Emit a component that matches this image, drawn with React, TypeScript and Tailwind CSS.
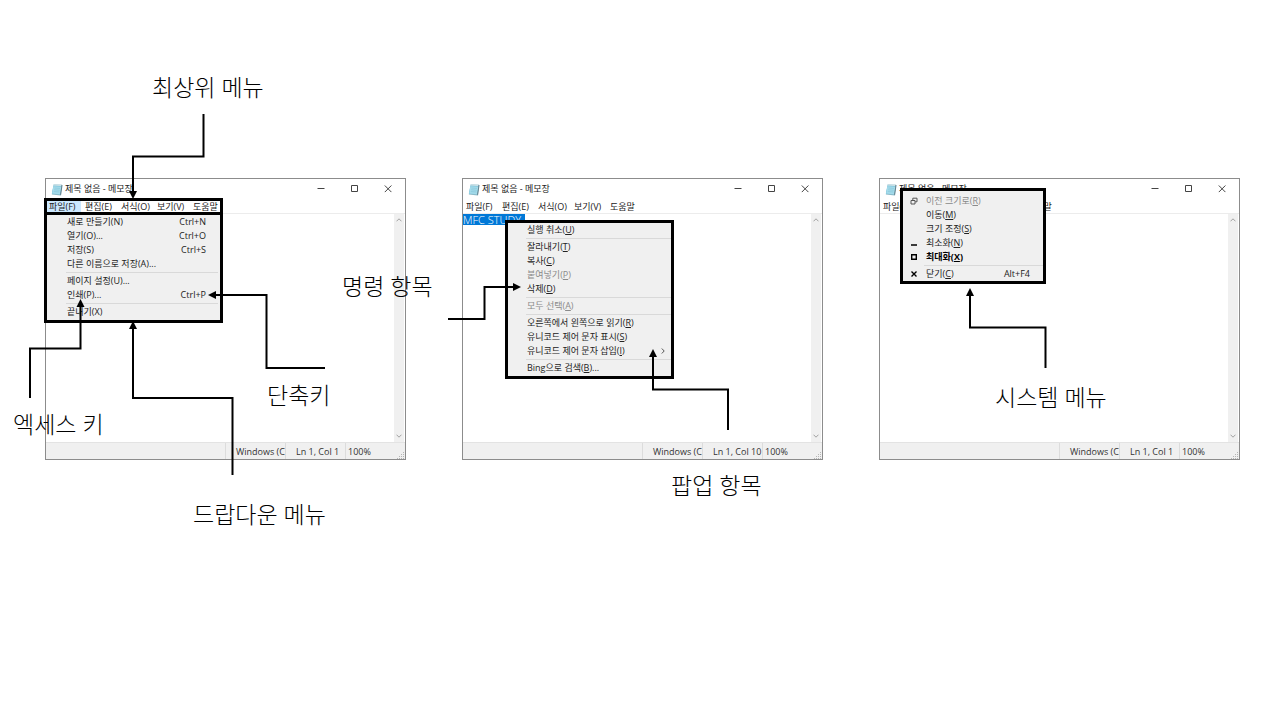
import type { ReactNode } from "react";

type Point = [number, number];

type MenuEntry =
  | "separator"
  | {
      text: string;
      accessKey?: string;
      tail?: string;
      shortcut?: string;
      disabled?: boolean;
      bold?: boolean;
      submenu?: boolean;
      icon?: ReactNode;
    };

const fileMenu: MenuEntry[] = [
  { text: "새로 만들기", accessKey: "N", shortcut: "Ctrl+N" },
  { text: "열기", accessKey: "O", tail: "...", shortcut: "Ctrl+O" },
  { text: "저장", accessKey: "S", shortcut: "Ctrl+S" },
  { text: "다른 이름으로 저장", accessKey: "A", tail: "..." },
  "separator",
  { text: "페이지 설정", accessKey: "U", tail: "..." },
  { text: "인쇄", accessKey: "P", tail: "...", shortcut: "Ctrl+P" },
  "separator",
  { text: "끝내기", accessKey: "X" },
];

const contextMenu: MenuEntry[] = [
  { text: "실행 취소", accessKey: "U" },
  "separator",
  { text: "잘라내기", accessKey: "T" },
  { text: "복사", accessKey: "C" },
  { text: "붙여넣기", accessKey: "P", disabled: true },
  { text: "삭제", accessKey: "D" },
  "separator",
  { text: "모두 선택", accessKey: "A", disabled: true },
  "separator",
  { text: "오른쪽에서 왼쪽으로 읽기", accessKey: "R" },
  { text: "유니코드 제어 문자 표시", accessKey: "S" },
  { text: "유니코드 제어 문자 삽입", accessKey: "I", submenu: true },
  "separator",
  { text: "Bing으로 검색", accessKey: "B", tail: "..." },
];

function RestoreIcon() {
  return (
    <svg viewBox="0 0 8 8" className="size-2" fill="none" stroke="#555" aria-hidden="true">
      <path d="M1 3.5h4v3.5H1zM2.8 3.3V1.2h4.2v3.6H5.2" />
    </svg>
  );
}

function MinimizeGlyph() {
  return (
    <svg viewBox="0 0 8 8" className="size-2" fill="none" stroke="#000" aria-hidden="true">
      <path d="M1 6h6" strokeWidth="1.5" />
    </svg>
  );
}

function MaximizeGlyph() {
  return (
    <svg viewBox="0 0 8 8" className="size-2" fill="none" stroke="#000" aria-hidden="true">
      <path d="M1.7 1.7h4.6v4.6H1.7z" strokeWidth="1.4" />
    </svg>
  );
}

function CloseGlyph() {
  return (
    <svg viewBox="0 0 8 8" className="size-2" fill="none" stroke="#000" aria-hidden="true">
      <path d="M1.5 1.5l5 5M6.5 1.5l-5 5" strokeWidth="1.4" />
    </svg>
  );
}

const systemMenu: MenuEntry[] = [
  { text: "이전 크기로", accessKey: "R", disabled: true, icon: <RestoreIcon /> },
  { text: "이동", accessKey: "M" },
  { text: "크기 조정", accessKey: "S" },
  { text: "최소화", accessKey: "N", icon: <MinimizeGlyph /> },
  { text: "최대화", accessKey: "X", bold: true, icon: <MaximizeGlyph /> },
  "separator",
  { text: "닫기", accessKey: "C", shortcut: "Alt+F4", icon: <CloseGlyph /> },
];

function NotepadIcon() {
  return (
    <svg viewBox="0 0 12 13" className="h-[13px] w-3 shrink-0" aria-hidden="true">
      <path d="M3 1.5l8.2.6-1.5 10.4-8.9-1z" fill="#8fb9c6" />
      <path d="M2.6 1.4l8 .4-1.4 9.7-8.4-.8z" fill="#7cc4dc" />
      <path d="M2.4 3.2l7.9.5-1.1 7.6-8-.8z" fill="#a5dbea" />
      <path d="M2.6 1.2l8 .4-.2 1.3-8-.4z" fill="#d5e3e6" />
      <path d="M10.6 1.8l.9.4-1.5 10.2-.9-.8z" fill="#607f8b" />
      <path d="M3.4 5l5.6.4M3.1 6.8l5.6.4M2.8 8.6l5.6.4" stroke="#79bdd2" strokeWidth=".5" />
    </svg>
  );
}

function TitleBar() {
  return (
    <header className="flex h-5 items-center pl-[5px]">
      <NotepadIcon />
      <h2 className="flex-1 pl-[2px] whitespace-nowrap text-[#222]">제목 없음 - 메모장</h2>
      <button type="button" aria-label="최소화" className="flex h-5 w-8 items-center justify-center">
        <svg viewBox="0 0 8 8" className="size-2" stroke="#444" aria-hidden="true">
          <path d="M.5 3.5h7" />
        </svg>
      </button>
      <button type="button" aria-label="최대화" className="flex h-5 w-[34px] items-center justify-center">
        <svg viewBox="0 0 8 8" className="size-2" fill="none" stroke="#444" aria-hidden="true">
          <path d="M1.5 .5h6v6h-6z" />
        </svg>
      </button>
      <button type="button" aria-label="닫기" className="flex h-5 w-[34px] items-center justify-center">
        <svg viewBox="0 0 8 8" className="size-2" stroke="#444" aria-hidden="true">
          <path d="M.8 .5l6.6 6.6M7.4 .5L.8 7.1" />
        </svg>
      </button>
    </header>
  );
}

function MenuBar({ open }: { open: boolean }) {
  const items = ["파일(F)", "편집(E)", "서식(O)", "보기(V)", "도움말"];
  return (
    <nav className="flex h-[15px] gap-[2px] border-b border-[#ececec] pl-px">
      {items.map((item, index) => (
        <button
          key={item}
          type="button"
          className={`w-[34px] pt-px pl-[2px] text-left whitespace-nowrap ${
            open && index === 0 ? "bg-[#cce8ff]" : ""
          }`}
        >
          {item}
        </button>
      ))}
    </nav>
  );
}

function ScrollBar() {
  return (
    <div className="mr-px flex w-[10px] shrink-0 flex-col justify-between bg-[#f0f0f0]">
      <button type="button" aria-label="위로 스크롤" className="flex h-3 items-center justify-center">
        <svg viewBox="0 0 6 4" className="h-1 w-1.5" fill="none" stroke="#a0a0a0" aria-hidden="true">
          <path d="M.5 3.3L3 .8l2.5 2.5" />
        </svg>
      </button>
      <button type="button" aria-label="아래로 스크롤" className="flex h-3 items-center justify-center">
        <svg viewBox="0 0 6 4" className="h-1 w-1.5" fill="none" stroke="#a0a0a0" aria-hidden="true">
          <path d="M.5 .7L3 3.2 5.5 .7" />
        </svg>
      </button>
    </div>
  );
}

function StatusBar({ position }: { position: string }) {
  return (
    <footer className="flex h-[17px] border-t border-[#e3e3e3] bg-[#f0f0f0] leading-[18px] whitespace-nowrap text-[#333]">
      <span className="flex-1" />
      <span className="w-[60px] overflow-hidden border-l border-[#dcdcdc] pl-[10px]">Windows (CRLF)</span>
      <span className="w-[60px] border-l border-[#dcdcdc] pl-[10px]">{position}</span>
      <span className="flex w-[60px] items-start justify-between border-l border-[#dcdcdc] pl-[2px]">
        100%
        <svg viewBox="0 0 8 8" className="size-2 self-end" fill="#b5b5b5" aria-hidden="true">
          <path d="M6 1h1v1H6zM4 3h1v1H4zM6 3h1v1H6zM2 5h1v1H2zM4 5h1v1H4zM6 5h1v1H6zM0 7h1v1H0zM2 7h1v1H2zM4 7h1v1H4zM6 7h1v1H6z" />
        </svg>
      </span>
    </footer>
  );
}

function NotepadWindow({
  text = "",
  position,
  menuOpen = false,
}: {
  text?: string;
  position: string;
  menuOpen?: boolean;
}) {
  return (
    <section className="flex h-[282px] flex-col border border-[#8c8c8c] bg-white">
      <TitleBar />
      <MenuBar open={menuOpen} />
      <div className="flex min-h-0 flex-1">
        <div className="flex min-w-0 flex-1 items-start">
          <textarea
            aria-label="본문"
            defaultValue={text}
            rows={1}
            className={
              text
                ? "h-[11px] w-[62px] resize-none overflow-hidden bg-[#0078d7] text-[11px] leading-[11px] font-light whitespace-nowrap text-white outline-none"
                : "h-full w-full resize-none outline-none"
            }
          />
        </div>
        <ScrollBar />
      </div>
      <StatusBar position={position} />
    </section>
  );
}

function MenuList({
  entries,
  underline = false,
  iconColumn = false,
  rowClass,
  separatorClass,
}: {
  entries: MenuEntry[];
  underline?: boolean;
  iconColumn?: boolean;
  rowClass: string;
  separatorClass: string;
}) {
  return (
    <ul>
      {entries.map((entry, index) =>
        entry === "separator" ? (
          <li key={index} className={`flex h-[3px] items-center ${separatorClass}`}>
            <hr className="w-full border-[#d9d9d9]" />
          </li>
        ) : (
          <li key={index}>
            <button
              type="button"
              disabled={entry.disabled}
              className={`flex h-[14px] w-full items-center text-left whitespace-nowrap ${rowClass} ${
                entry.disabled ? "text-[#8a8a8a]" : entry.bold ? "font-bold text-black" : "text-[#222]"
              }`}
            >
              {iconColumn && <span className="flex w-4 shrink-0">{entry.icon}</span>}
              <span className="flex-1">
                {entry.text}(
                <span className={underline ? "underline underline-offset-1" : ""}>{entry.accessKey}</span>)
                {entry.tail}
              </span>
              {entry.shortcut && <span>{entry.shortcut}</span>}
              {entry.submenu && (
                <svg viewBox="0 0 4 6" className="h-1.5 w-1" fill="none" stroke="#444" aria-hidden="true">
                  <path d="M.8 .5L3.2 3 .8 5.5" strokeWidth=".9" />
                </svg>
              )}
            </button>
          </li>
        ),
      )}
    </ul>
  );
}

function Connectors({ lines }: { lines: Point[][] }) {
  return (
    <svg className="pointer-events-none absolute inset-0 h-full w-full overflow-visible" aria-hidden="true">
      {lines.map((points, index) => {
        const [tipX, tipY] = points[points.length - 1];
        const [prevX, prevY] = points[points.length - 2];
        const dx = Math.sign(tipX - prevX);
        const dy = Math.sign(tipY - prevY);
        const baseX = tipX - dx * 8;
        const baseY = tipY - dy * 8;
        const path = [...points.slice(0, -1), [baseX, baseY]].map((p) => p.join(",")).join(" ");
        const head = `${tipX},${tipY} ${baseX + dy * 4},${baseY + dx * 4} ${baseX - dy * 4},${baseY - dx * 4}`;
        return (
          <g key={index}>
            <polyline points={path} fill="none" stroke="#000" strokeWidth="2" />
            <polygon points={head} fill="#000" />
          </g>
        );
      })}
    </svg>
  );
}

function Label({ place, children }: { place: string; children: ReactNode }) {
  return (
    <p className={`absolute text-[23px] leading-6 font-light whitespace-nowrap text-black ${place}`}>{children}</p>
  );
}

export default function App() {
  return (
    <main className="min-h-screen overflow-x-hidden bg-white pt-[178px] pr-10 pb-10 pl-[45px] font-['Open_Sans','Noto_Sans_CJK_KR',sans-serif] text-[9px] leading-[14px] text-[#222]">
      <div className="grid grid-cols-3 gap-14">
        <figure className="relative">
          <NotepadWindow position="Ln 1, Col 1" menuOpen />
          <div className="pointer-events-none absolute top-5 -left-px h-[17px] w-[179px] border-3 border-black" />
          <div className="absolute top-[34px] -left-px w-[179px] border-3 border-black bg-[#f0f0f0] pb-px">
            <MenuList entries={fileMenu} rowClass="pr-[14px] pl-5" separatorClass="pr-[2px] pl-[19px]" />
          </div>
          <Connectors
            lines={[
              [[158.5, -64], [158.5, -21.5], [88, -21.5], [88, 21]],
              [[-15, 220], [-15, 170.5], [35.5, 170.5], [35.5, 121]],
              [[187.5, 297], [187.5, 220], [88, 220], [88, 143]],
              [[280, 190], [221.5, 190], [221.5, 117], [163, 117]],
            ]}
          />
          <Label place="-top-[103px] left-[107px]">최상위 메뉴</Label>
          <Label place="top-[234px] -left-8">엑세스 키</Label>
          <Label place="top-[205px] left-[222px]">단축키</Label>
          <Label place="top-[324px] left-[148px]">드랍다운 메뉴</Label>
        </figure>

        <figure className="relative">
          <NotepadWindow text="MFC STUDY" position="Ln 1, Col 10" />
          <div className="absolute top-[42px] left-[43px] w-[169px] border-3 border-black bg-[#f0f0f0] pb-px">
            <MenuList entries={contextMenu} underline rowClass="pr-[6px] pl-[19px]" separatorClass="pl-[18px]" />
          </div>
          <Connectors
            lines={[
              [[-14, 141], [22.5, 141], [22.5, 109], [59, 109]],
              [[266, 252], [266, 211.5], [191, 211.5], [191, 171]],
            ]}
          />
          <Label place="top-[96px] -left-[120px]">명령 항목</Label>
          <Label place="top-[295px] left-[209px]">팝업 항목</Label>
        </figure>

        <figure className="relative">
          <NotepadWindow position="Ln 1, Col 1" />
          <div className="absolute top-[10px] left-[21px] w-[146px] border-3 border-black bg-[#f0f0f0] pt-[3px]">
            <MenuList entries={systemMenu} underline iconColumn rowClass="pr-[13px] pl-[7px]" separatorClass="pl-[21px]" />
          </div>
          <Connectors lines={[[[166.5, 190], [166.5, 149.5], [91, 149.5], [91, 110]]]} />
          <Label place="top-[207px] left-[116px]">시스템 메뉴</Label>
        </figure>
      </div>
    </main>
  );
}
